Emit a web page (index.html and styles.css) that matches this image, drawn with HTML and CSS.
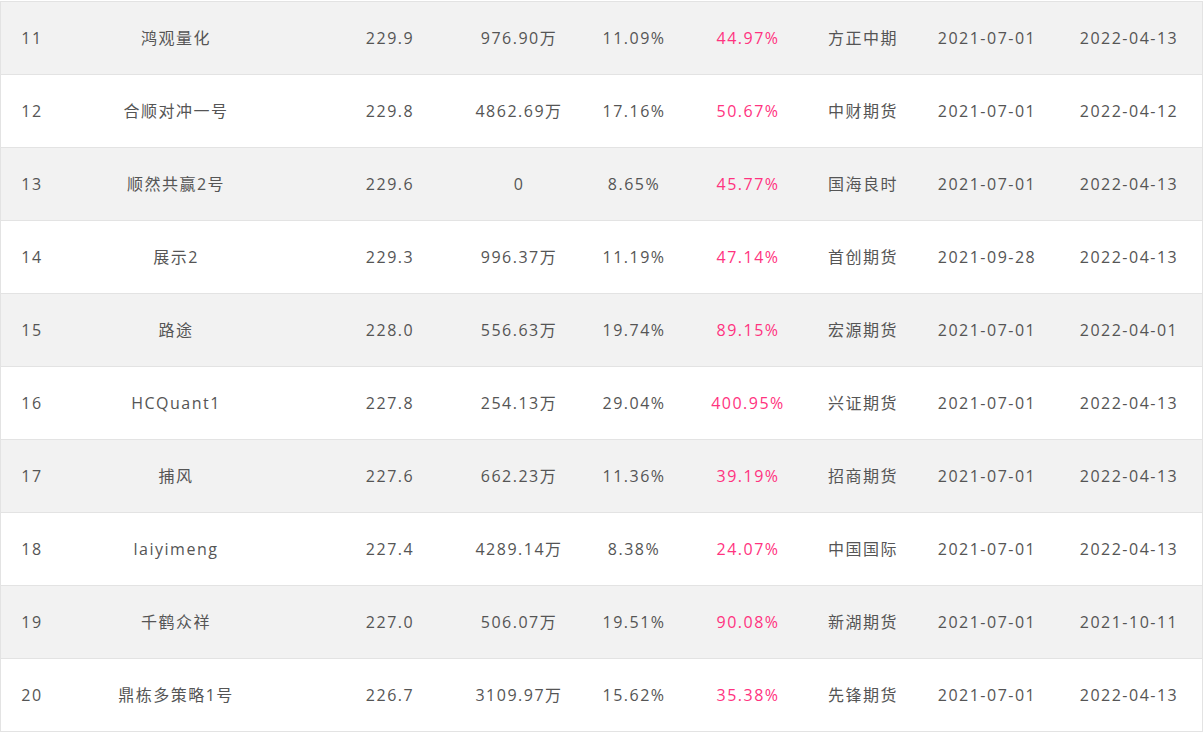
FILE: index.html
```html
<!DOCTYPE html>
<html lang="zh-CN">
<head>
<meta charset="utf-8">
<title>排行</title>
<link rel="stylesheet" href="styles.css">
</head>
<body>
<div class="table">
  <div class="row odd"><span class="c c1">11</span><span class="c c2">鸿观量化</span><span class="c c3">229.9</span><span class="c c4">976.90万</span><span class="c c5">11.09%</span><span class="c c6 pink">44.97%</span><span class="c c7">方正中期</span><span class="c c8">2021-07-01</span><span class="c c9">2022-04-13</span></div>
  <div class="row"><span class="c c1">12</span><span class="c c2">合顺对冲一号</span><span class="c c3">229.8</span><span class="c c4">4862.69万</span><span class="c c5">17.16%</span><span class="c c6 pink">50.67%</span><span class="c c7">中财期货</span><span class="c c8">2021-07-01</span><span class="c c9">2022-04-12</span></div>
  <div class="row odd"><span class="c c1">13</span><span class="c c2">顺然共赢2号</span><span class="c c3">229.6</span><span class="c c4">0</span><span class="c c5">8.65%</span><span class="c c6 pink">45.77%</span><span class="c c7">国海良时</span><span class="c c8">2021-07-01</span><span class="c c9">2022-04-13</span></div>
  <div class="row"><span class="c c1">14</span><span class="c c2">展示2</span><span class="c c3">229.3</span><span class="c c4">996.37万</span><span class="c c5">11.19%</span><span class="c c6 pink">47.14%</span><span class="c c7">首创期货</span><span class="c c8">2021-09-28</span><span class="c c9">2022-04-13</span></div>
  <div class="row odd"><span class="c c1">15</span><span class="c c2">路途</span><span class="c c3">228.0</span><span class="c c4">556.63万</span><span class="c c5">19.74%</span><span class="c c6 pink">89.15%</span><span class="c c7">宏源期货</span><span class="c c8">2021-07-01</span><span class="c c9">2022-04-01</span></div>
  <div class="row"><span class="c c1">16</span><span class="c c2">HCQuant1</span><span class="c c3">227.8</span><span class="c c4">254.13万</span><span class="c c5">29.04%</span><span class="c c6 pink">400.95%</span><span class="c c7">兴证期货</span><span class="c c8">2021-07-01</span><span class="c c9">2022-04-13</span></div>
  <div class="row odd"><span class="c c1">17</span><span class="c c2">捕风</span><span class="c c3">227.6</span><span class="c c4">662.23万</span><span class="c c5">11.36%</span><span class="c c6 pink">39.19%</span><span class="c c7">招商期货</span><span class="c c8">2021-07-01</span><span class="c c9">2022-04-13</span></div>
  <div class="row"><span class="c c1">18</span><span class="c c2">laiyimeng</span><span class="c c3">227.4</span><span class="c c4">4289.14万</span><span class="c c5">8.38%</span><span class="c c6 pink">24.07%</span><span class="c c7">中国国际</span><span class="c c8">2021-07-01</span><span class="c c9">2022-04-13</span></div>
  <div class="row odd"><span class="c c1">19</span><span class="c c2">千鹤众祥</span><span class="c c3">227.0</span><span class="c c4">506.07万</span><span class="c c5">19.51%</span><span class="c c6 pink">90.08%</span><span class="c c7">新湖期货</span><span class="c c8">2021-07-01</span><span class="c c9">2021-10-11</span></div>
  <div class="row"><span class="c c1">20</span><span class="c c2">鼎栋多策略1号</span><span class="c c3">226.7</span><span class="c c4">3109.97万</span><span class="c c5">15.62%</span><span class="c c6 pink">35.38%</span><span class="c c7">先锋期货</span><span class="c c8">2021-07-01</span><span class="c c9">2022-04-13</span></div>
</div>
</body>
</html>
```
FILE: styles.css
```css
html, body {
  margin: 0;
  padding: 0;
  background: #fff;
}
body {
  padding-top: 1px;
  font-family: "Open Sans", "Noto Sans CJK SC", sans-serif;
  font-size: 16px;
  color: #555;
  letter-spacing: 1.5px;
}
.table {
  width: 1203px;
  box-sizing: border-box;
  border: 1px solid #e3e3e3;
  border-bottom: none;
}
.row {
  display: grid;
  grid-template-columns: 103px 179px 171px 123px 114px 114px 120px 133px 143px;
  height: 72px;
  border-bottom: 1px solid #e3e3e3;
  align-items: center;
  background: #fff;
}
.row.odd {
  background: #f2f2f2;
}
.c {
  text-align: center;
  white-space: nowrap;
  line-height: 20px;
}
.c1 { padding-right: 41px; }
.c2 { padding-right: 35px; }
.c3 { padding-left: 43px; }
.c4 { padding-left: 7px; }
.c7 { padding-right: 4px; }
.c8 { padding-right: 9px; }
.c9 { padding-right: 1px; }
.pink {
  color: #ff3380;
}
```
